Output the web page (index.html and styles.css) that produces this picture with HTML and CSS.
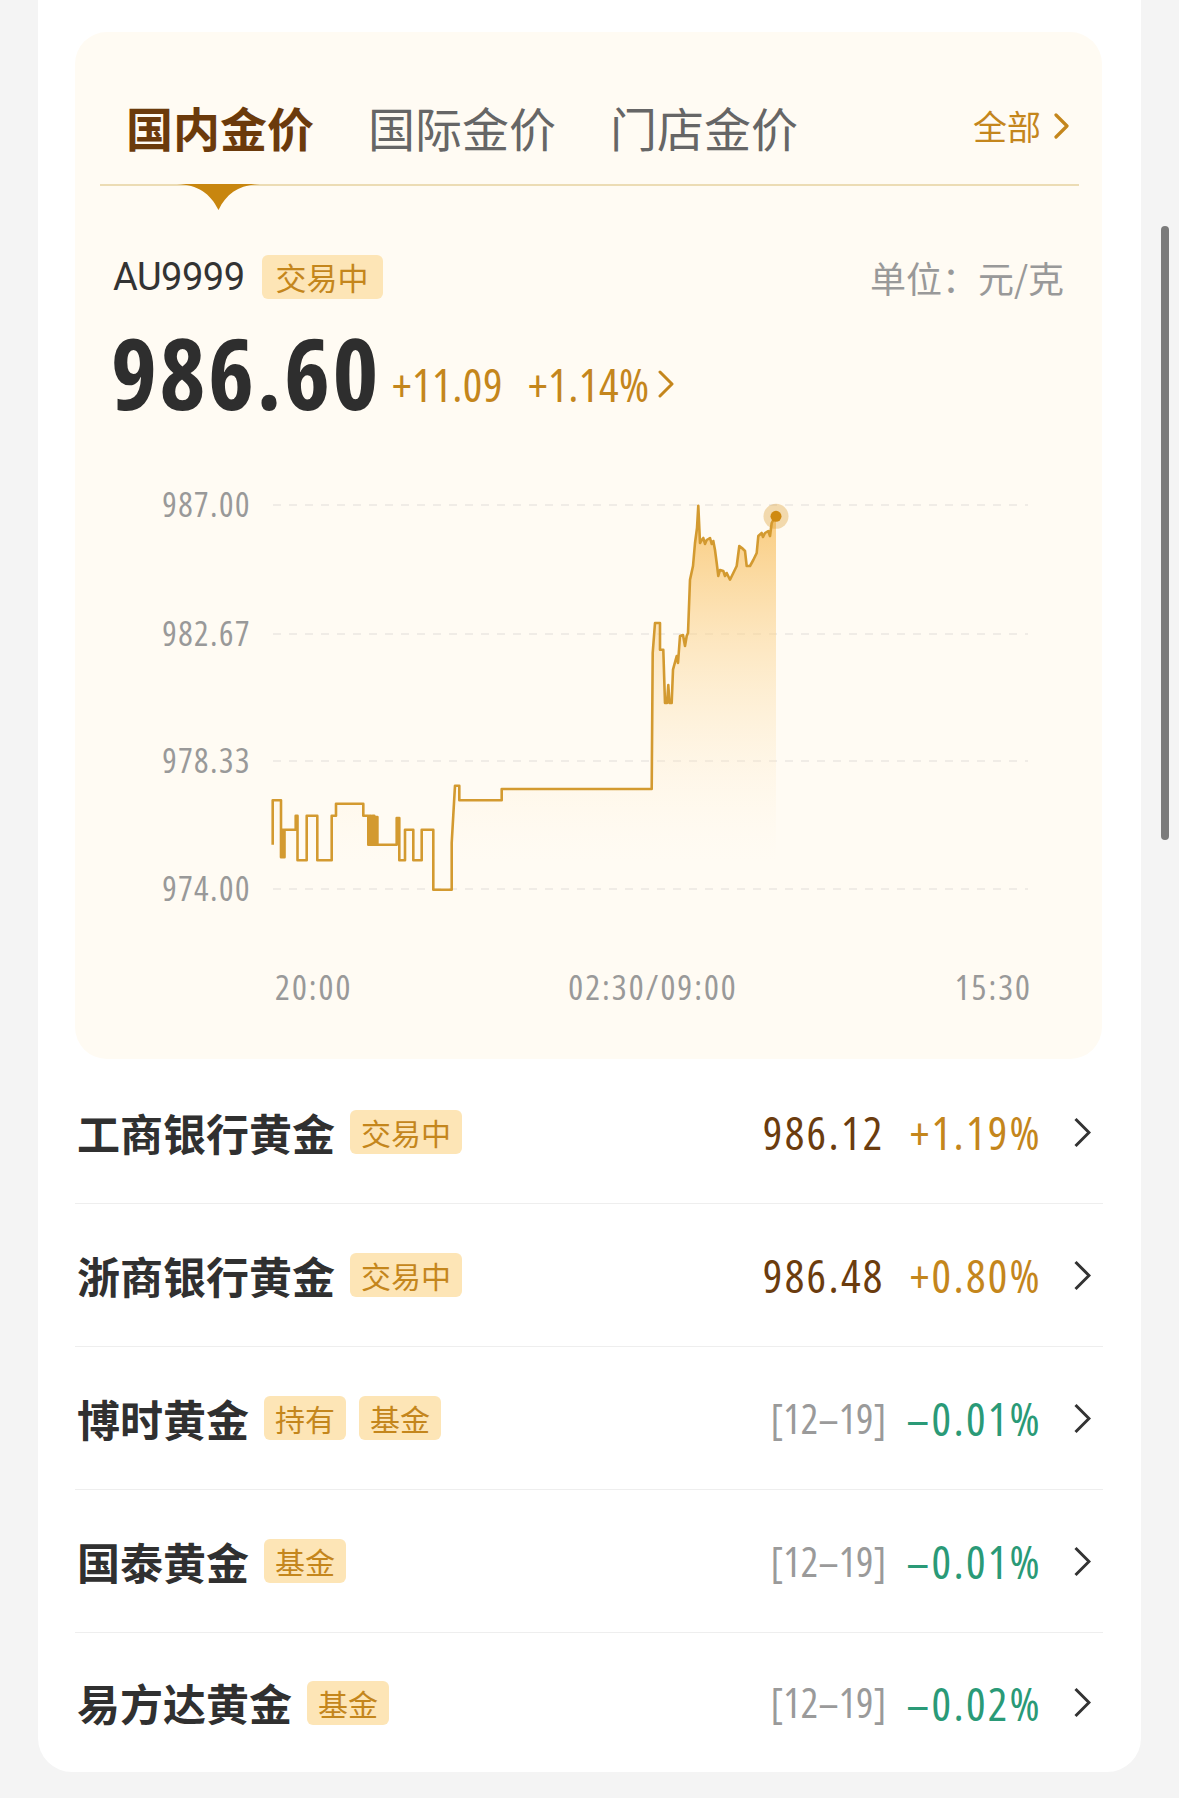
FILE: index.html
```html
<!DOCTYPE html>
<html lang="zh-CN">
<head>
<meta charset="utf-8">
<title>金价</title>
<link rel="stylesheet" href="styles.css">
</head>
<body>
<div class="card">
  <div class="panel">
    <div class="tabs">
      <span class="tab active">国内金价</span>
      <span class="tab">国际金价</span>
      <span class="tab">门店金价</span>
      <span class="all">全部<svg class="all-arrow" viewBox="0 0 17 26" width="17" height="26"><polyline points="3,2 14,13 3,24" fill="none" stroke="#c4861c" stroke-width="3.2" stroke-linecap="round" stroke-linejoin="round"/></svg></span>
      <svg class="indicator" viewBox="0 0 83 26" width="83" height="26"><path d="M0,0 H83 C62,1 50,9 41.5,26 C33,9 21,1 0,0 Z" fill="#c8860f"/></svg>
    </div>

    <div class="meta">
      <div class="meta-left">
        <span class="code">AU9999</span>
        <span class="badge badge-lg">交易中</span>
      </div>
      <span class="unit">单位：元/克</span>
    </div>

    <div class="price-row">
      <span class="price">986.60</span>
      <span class="chg">+11.09</span>
      <span class="chg chg-pct">+1.14%<svg class="chg-arrow" viewBox="0 0 18 28" width="18" height="28"><polyline points="3,2 15,14 3,26" fill="none" stroke="#c4861c" stroke-width="3" stroke-linecap="round" stroke-linejoin="round"/></svg></span>
    </div>

    <svg class="chart" viewBox="75 425 1027 605" width="1027" height="605">
      <defs>
        <linearGradient id="fillGrad" gradientUnits="userSpaceOnUse" x1="0" y1="500" x2="0" y2="860">
          <stop offset="0" stop-color="#f8c062" stop-opacity="0.85"/>
          <stop offset="0.45" stop-color="#fbd696" stop-opacity="0.45"/>
          <stop offset="1" stop-color="#fff3de" stop-opacity="0"/>
        </linearGradient>
      </defs>
      <g class="grid">
        <line x1="273" y1="502" x2="1028" y2="502"/>
        <line x1="273" y1="631" x2="1028" y2="631"/>
        <line x1="273" y1="758" x2="1028" y2="758"/>
        <line x1="273" y1="886" x2="1028" y2="886"/>
      </g>
      <g class="ylab">
        <text x="251" y="514">987.00</text>
        <text x="251" y="643">982.67</text>
        <text x="251" y="770">978.33</text>
        <text x="251" y="898">974.00</text>
      </g>
      <path class="area" d="M272.7,841.7 V797.3 H281 V854.3 H282 V826.7 H283.3 V854.3 H284.5 V826.7 H295.7 V812.7 H297.5 V857.3 H306.7 V812.7 H317.3 V857.3 H331.7 V812.7 H336 V800.7 H363.3 V812.7 H368.3 V841.7 H369.6 V812.7 H371 V841.7 H372.6 V812.7 H374.2 V841.7 H375.8 V814 H377.4 V841.7 H396.7 V815 H399.3 V857.3 H405 V826.7 H413.3 V857.3 H421.7 V826.7 H433.3 V886.7 H451.7 V840 L453.3,812 L455,782.7 H459.3 V797.3 H501.7 V786 H651.7 L652.7,650 L655,620 H660 V646.7 H663.3 L665,700 H667 L668.3,682 L669.5,700 H671.7 L673,666.7 L676.7,653 L678,660 L680,633 L683,632 L685,643 L686.7,633 L688,630 L690,576.7 L693,563 L695,540 L697,525 L698.3,502.7 L700,540 L701.7,537 L703.3,535 L705,541 L706.7,537 L710,535 L711.7,541 L713.3,538 L715,547 L716.7,560 L718.3,573 L720,567 L723.3,568 L725,573 L726.7,570 L730,576.7 L733.3,570 L736.7,563 L739.3,543 L742,545 L745,548 L746.7,563 L750,563 L753.3,557 L756.7,550 L758.3,533 L761.7,530 L763,534 L765,530 L768.3,528 L770,533 L771.7,520 L773.3,517 L776,513.3 V890 H272.7 Z"/>
      <path class="line" d="M272.7,841.7 V797.3 H281 V854.3 H282 V826.7 H283.3 V854.3 H284.5 V826.7 H295.7 V812.7 H297.5 V857.3 H306.7 V812.7 H317.3 V857.3 H331.7 V812.7 H336 V800.7 H363.3 V812.7 H368.3 V841.7 H369.6 V812.7 H371 V841.7 H372.6 V812.7 H374.2 V841.7 H375.8 V814 H377.4 V841.7 H396.7 V815 H399.3 V857.3 H405 V826.7 H413.3 V857.3 H421.7 V826.7 H433.3 V886.7 H451.7 V840 L453.3,812 L455,782.7 H459.3 V797.3 H501.7 V786 H651.7 L652.7,650 L655,620 H660 V646.7 H663.3 L665,700 H667 L668.3,682 L669.5,700 H671.7 L673,666.7 L676.7,653 L678,660 L680,633 L683,632 L685,643 L686.7,633 L688,630 L690,576.7 L693,563 L695,540 L697,525 L698.3,502.7 L700,540 L701.7,537 L703.3,535 L705,541 L706.7,537 L710,535 L711.7,541 L713.3,538 L715,547 L716.7,560 L718.3,573 L720,567 L723.3,568 L725,573 L726.7,570 L730,576.7 L733.3,570 L736.7,563 L739.3,543 L742,545 L745,548 L746.7,563 L750,563 L753.3,557 L756.7,550 L758.3,533 L761.7,530 L763,534 L765,530 L768.3,528 L770,533 L771.7,520 L773.3,517 L776,513.3"/>
      <circle cx="776" cy="513.3" r="12.5" fill="#d99c2c" fill-opacity="0.35"/>
      <circle cx="776" cy="513.3" r="5.5" fill="#cf8a12"/>
      <g class="xlab">
        <text x="275" y="997" text-anchor="start">20:00</text>
        <text x="653" y="997" text-anchor="middle">02:30/09:00</text>
        <text x="1032" y="997" text-anchor="end">15:30</text>
      </g>
    </svg>
  </div>

  <ul class="list">
    <li class="row">
      <span class="name">工商银行黄金</span>
      <span class="badge">交易中</span>
      <span class="right">
        <span class="val">986.12</span>
        <span class="pct up">+1.19%</span>
        <svg class="arrow" viewBox="0 0 18 31" width="18" height="31"><polyline points="2.5,2 16,15.5 2.5,29" fill="none" stroke="#333" stroke-width="3"/></svg>
      </span>
    </li>
    <li class="row">
      <span class="name">浙商银行黄金</span>
      <span class="badge">交易中</span>
      <span class="right">
        <span class="val">986.48</span>
        <span class="pct up">+0.80%</span>
        <svg class="arrow" viewBox="0 0 18 31" width="18" height="31"><polyline points="2.5,2 16,15.5 2.5,29" fill="none" stroke="#333" stroke-width="3"/></svg>
      </span>
    </li>
    <li class="row">
      <span class="name">博时黄金</span>
      <span class="badge">持有</span>
      <span class="badge">基金</span>
      <span class="right">
        <span class="date">[12–19]</span>
        <span class="pct down">–0.01%</span>
        <svg class="arrow" viewBox="0 0 18 31" width="18" height="31"><polyline points="2.5,2 16,15.5 2.5,29" fill="none" stroke="#333" stroke-width="3"/></svg>
      </span>
    </li>
    <li class="row">
      <span class="name">国泰黄金</span>
      <span class="badge">基金</span>
      <span class="right">
        <span class="date">[12–19]</span>
        <span class="pct down">–0.01%</span>
        <svg class="arrow" viewBox="0 0 18 31" width="18" height="31"><polyline points="2.5,2 16,15.5 2.5,29" fill="none" stroke="#333" stroke-width="3"/></svg>
      </span>
    </li>
    <li class="row">
      <span class="name">易方达黄金</span>
      <span class="badge">基金</span>
      <span class="right">
        <span class="date">[12–19]</span>
        <span class="pct down">–0.02%</span>
        <svg class="arrow" viewBox="0 0 18 31" width="18" height="31"><polyline points="2.5,2 16,15.5 2.5,29" fill="none" stroke="#333" stroke-width="3"/></svg>
      </span>
    </li>
  </ul>
</div>
<div class="scrollbar"></div>
</body>
</html>
```

FILE: styles.css
```css
* { box-sizing: border-box; }

html, body {
  margin: 0;
  padding: 0;
}

body {
  background: #f4f4f4;
  width: 1179px;
  height: 1798px;
  overflow: hidden;
  position: relative;
  font-family: "Noto Sans CJK SC", "Noto Sans", sans-serif;
  color: #333;
}

.card {
  margin-left: 38px;
  width: 1103px;
  height: 1772px;
  background: #ffffff;
  border-radius: 0 0 34px 34px;
  padding: 32px 39px 0 37px;
}

.panel {
  height: 1027px;
  background: #fffbf3;
  border-radius: 32px;
}

/* tabs */
.tabs {
  position: relative;
  display: flex;
  align-items: center;
  gap: 54px;
  height: 154px;
  margin: 0 23px 0 25px;
  padding: 36px 9px 0 26px;
  border-bottom: 2px solid #ecdcb4;
}

.tab {
  font-size: 47px;
  line-height: 1;
  color: #666;
  white-space: nowrap;
}

.tab.active {
  font-weight: 700;
  color: #6b3a0b;
}

.all {
  margin-left: auto;
  display: flex;
  align-items: center;
  gap: 12px;
  font-size: 34px;
  line-height: 1;
  color: #c4861c;
}

.all-arrow { display: block; }

.indicator {
  position: absolute;
  top: 100%;
  left: 77px;
  display: block;
}

/* meta row */
.meta {
  display: flex;
  justify-content: space-between;
  align-items: center;
  height: 44px;
  margin-top: 69px;
  padding: 0 38px;
}

.meta-left {
  display: flex;
  align-items: center;
  gap: 17px;
}

.code {
  font-family: "Roboto", "Liberation Sans", sans-serif;
  font-size: 38px;
  line-height: 1;
  color: #333;
  letter-spacing: -0.5px;
}

.badge {
  display: inline-block;
  height: 44px;
  line-height: 44px;
  padding: 0 11px;
  font-size: 30px;
  color: #c4861c;
  background: #fde5b6;
  border-radius: 6px;
  white-space: nowrap;
}

.badge.badge-lg {
  font-size: 31px;
  padding: 0 14px;
}

.unit {
  font-size: 36px;
  line-height: 1;
  color: #999;
}

/* price */
.price-row {
  display: flex;
  align-items: flex-end;
  margin-top: 24px;
  padding-left: 36px;
  height: 98px;
}

.price {
  font-family: "Open Sans", "Roboto", sans-serif;
  font-stretch: 75%;
  font-weight: 700;
  font-size: 98px;
  line-height: 98px;
  letter-spacing: 2.5px;
  color: #2e2e2e;
}

.chg {
  font-family: "Open Sans", "Roboto", sans-serif;
  font-stretch: 75%;
  font-size: 46px;
  line-height: 46px;
  letter-spacing: 0.5px;
  color: #c4861c;
  margin-left: 11px;
  margin-bottom: 14px;
}

.chg-pct {
  display: flex;
  align-items: center;
  gap: 7px;
  margin-left: 25px;
}

.chg-arrow { display: block; }

/* chart */
.chart {
  display: block;
  margin-top: 7px;
}

.grid line {
  stroke: #ebe8e2;
  stroke-width: 1.5;
  stroke-dasharray: 8 8;
}

.ylab text {
  font-family: "Open Sans", "Roboto", sans-serif;
  font-stretch: 75%;
  font-size: 34px;
  letter-spacing: 1.5px;
  fill: #999;
  text-anchor: end;
}

.xlab text {
  font-family: "Open Sans", "Roboto", sans-serif;
  font-stretch: 75%;
  font-size: 35px;
  letter-spacing: 2px;
  fill: #999;
}

.area {
  fill: url(#fillGrad);
  stroke: none;
}

.line {
  fill: none;
  stroke: #d39a30;
  stroke-width: 2.6;
  stroke-linejoin: round;
}

/* list */
.list {
  list-style: none;
  margin: 0;
  padding: 2px 0 0;
  width: 1028px;
}

.row {
  display: flex;
  align-items: center;
  height: 143px;
  padding: 0 12px 0 2px;
  border-bottom: 1px solid #eeeeee;
}

.row:last-child {
  border-bottom: none;
  height: 139px;
}

.name {
  font-size: 43px;
  font-weight: 700;
  line-height: 1;
  color: #303030;
  margin-right: 15px;
  white-space: nowrap;
}

.badge + .badge { margin-left: 13px; }

.right {
  margin-left: auto;
  display: flex;
  align-items: center;
}

.val, .pct {
  font-family: "Open Sans", "Roboto", sans-serif;
  font-stretch: 75%;
  font-weight: 500;
  font-size: 46px;
  line-height: 1;
  letter-spacing: 2.3px;
}

.val { color: #6b3c0e; }

.pct { margin-left: 25px; }
.pct.up { color: #c4861c; }
.pct.down { color: #2a9a77; margin-left: 20px; }

.date {
  font-family: "Open Sans", "Roboto", sans-serif;
  font-stretch: 75%;
  font-size: 41px;
  line-height: 1;
  color: #9a9a9a;
}

.arrow {
  display: block;
  margin-left: 31px;
}

.scrollbar {
  position: absolute;
  left: 1161px;
  top: 226px;
  width: 8px;
  height: 614px;
  background: #7b7b7b;
  border-radius: 4px;
}
```
